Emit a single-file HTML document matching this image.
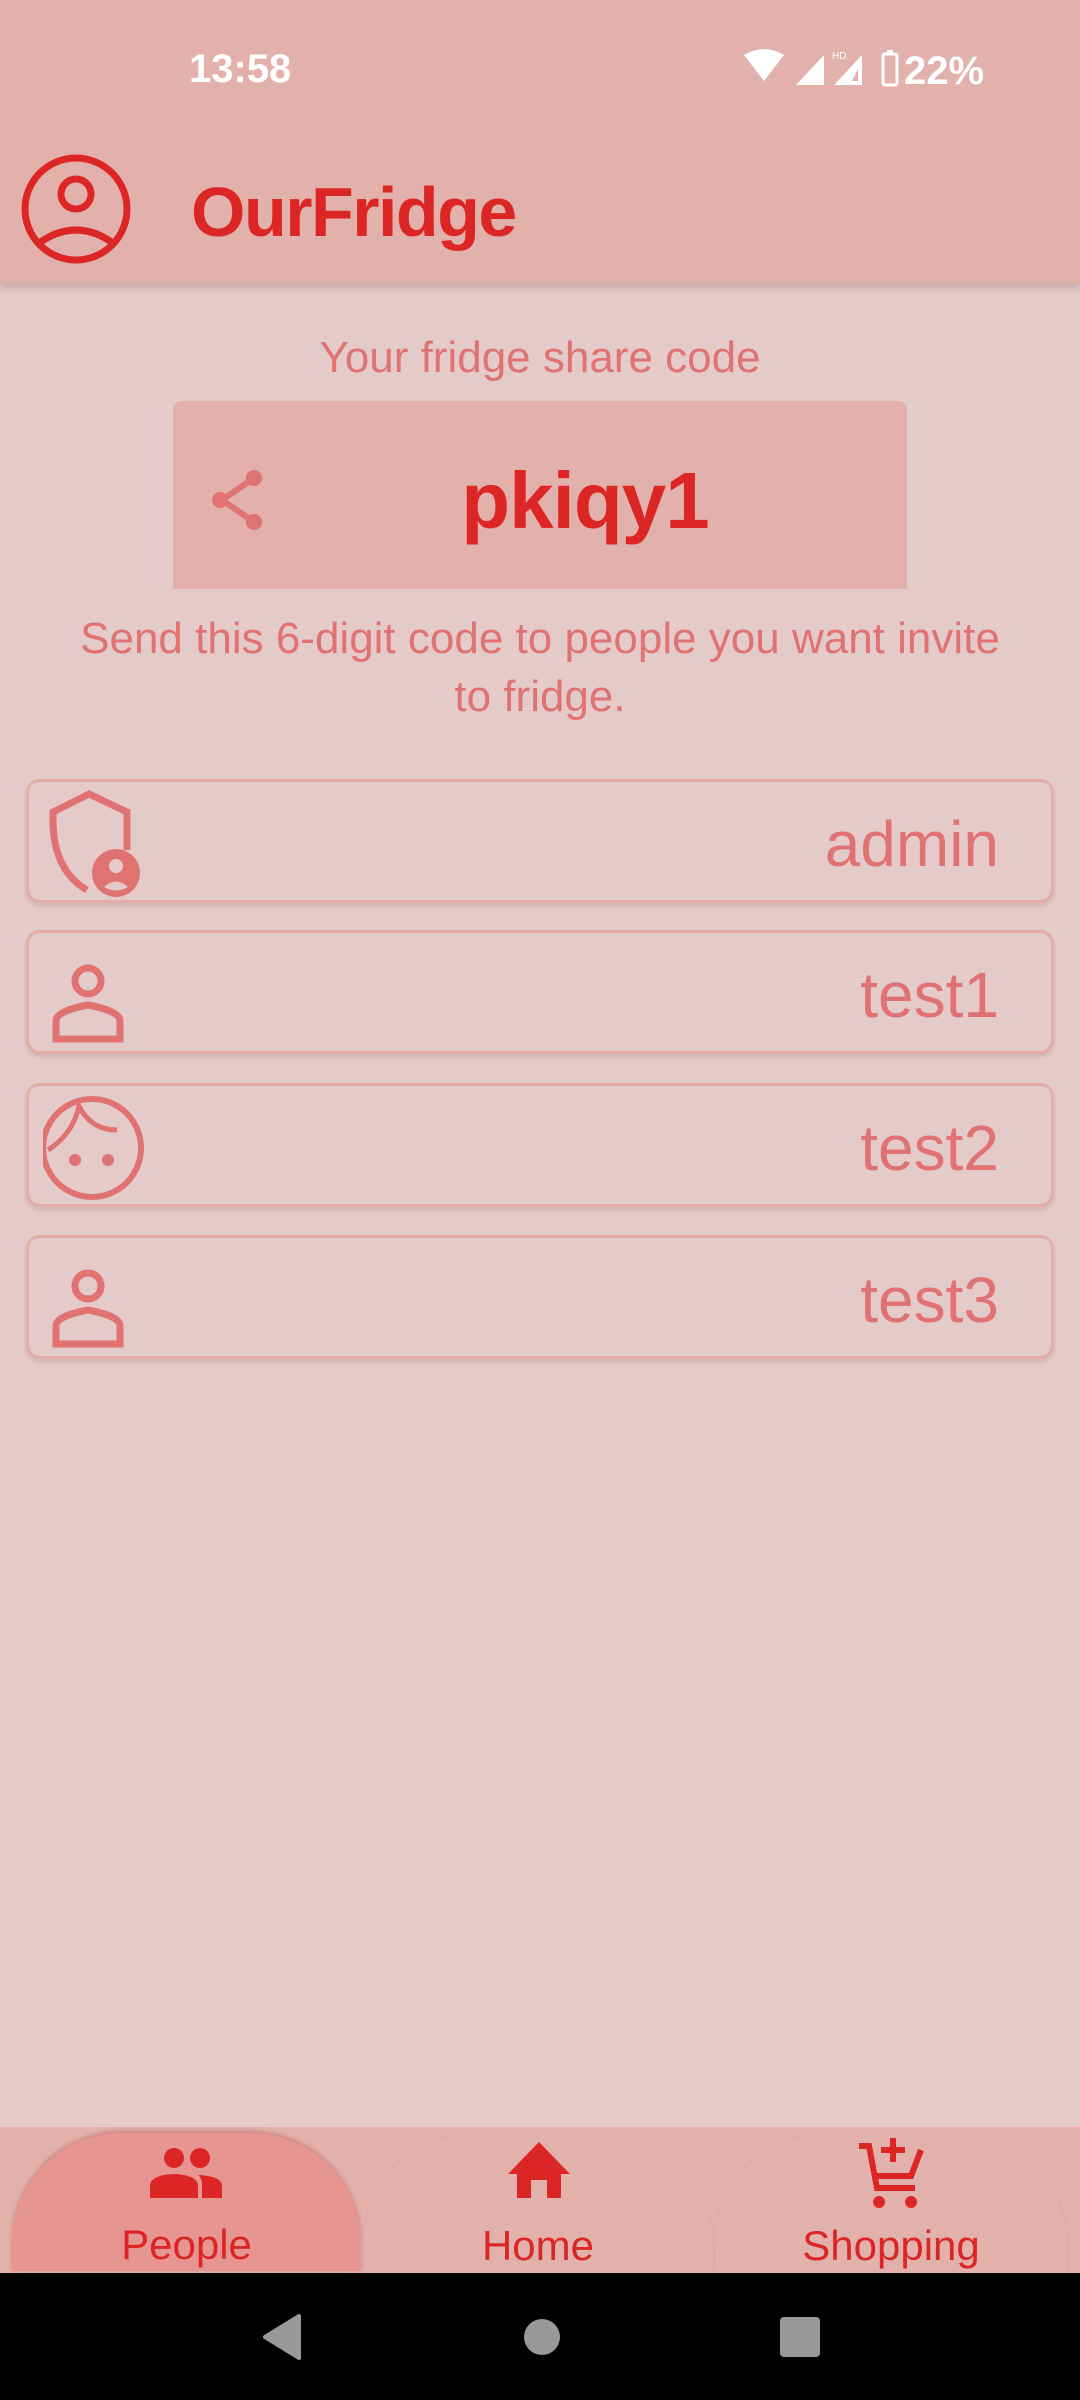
<!DOCTYPE html>
<html><head><meta charset="utf-8"><style>
*{margin:0;padding:0;box-sizing:border-box}
body{width:1080px;height:2400px;background:#e4cbca;font-family:"Liberation Sans",sans-serif;position:relative;overflow:hidden}
.abs{position:absolute}
.top{left:0;top:0;width:1080px;height:283px;background:#e3b1ab;box-shadow:0 4px 8px rgba(150,90,90,.35)}
.card{left:26px;width:1028px;height:124px;border:3px solid #e5aca7;border-radius:14px;box-shadow:0 3px 4px rgba(160,110,110,.25)}
.card .t{position:absolute;right:52px;top:26px;font-size:64px;color:#e07272;line-height:72px}
.card svg{position:absolute;left:14px;top:8px}
.nav{left:0;top:2127px;width:1080px;height:146px;background:#e3b1ab}
.tab{top:2133px;height:138px;border-radius:110px 110px 0 0;text-align:center}
.lbl{position:absolute;left:0;right:0;top:88px;font-size:42px;color:#dc2626}
</style></head><body>
<div class="abs top"></div>
<div class="abs" style="left:189px;top:47px;font-size:40px;color:#fff;font-weight:bold">13:58</div>
<svg class="abs" style="left:740px;top:47px" width="260" height="42" viewBox="0 0 260 42">
<path d="M4 8 Q24 -4 44 8 L24 34 Z" fill="#fff"/>
<path d="M56 38 L84 8 L84 38 Z" fill="#fff"/>
<text x="92" y="12" font-size="10" fill="#fff" font-family="Liberation Sans">HD</text>
<path d="M94 38 L122 8 L122 38 Z M112 34 L118 34 L118 22 Z" fill="#fff" fill-rule="evenodd"/>
<rect x="143" y="7" width="14" height="31" rx="2" fill="none" stroke="#fff" stroke-width="3"/>
<rect x="147" y="3" width="6" height="5" fill="#fff"/>
<text x="164" y="37" font-size="40" fill="#fff" font-weight="bold" font-family="Liberation Sans">22%</text>
</svg>
<svg class="abs" style="left:20px;top:153px" width="112" height="112" viewBox="0 0 112 112">
<circle cx="56" cy="56" r="51" fill="none" stroke="#dc2626" stroke-width="7"/>
<circle cx="56" cy="41" r="15" fill="none" stroke="#dc2626" stroke-width="7"/>
<path d="M19 90 Q56 64 93 90" fill="none" stroke="#dc2626" stroke-width="7"/>
</svg>
<div class="abs" style="left:191px;top:172px;font-size:70px;font-weight:bold;color:#dc2626;letter-spacing:-1.5px">OurFridge</div>
<div class="abs" style="left:0;width:1080px;top:333px;text-align:center;font-size:44px;color:#e07272">Your fridge share code</div>
<div class="abs" style="left:173px;top:401px;width:734px;height:188px;background:#e3b1ab;border-radius:8px 8px 0 0"></div>
<svg class="abs" style="left:208px;top:468px" width="56" height="64" viewBox="0 0 56 64">
<path d="M46 10 L14 32 L46 54" fill="none" stroke="#e07272" stroke-width="6"/>
<circle cx="46" cy="10" r="8" fill="#e07272"/><circle cx="12" cy="32" r="8" fill="#e07272"/><circle cx="46" cy="54" r="8" fill="#e07272"/>
</svg>
<div class="abs" style="left:330px;width:510px;top:455px;text-align:center;font-size:80px;font-weight:bold;color:#dc2626;letter-spacing:-1px">pkiqy1</div>
<div class="abs" style="left:60px;width:960px;top:610px;text-align:center;font-size:44px;line-height:58px;color:#e07272">Send this 6-digit code to people you want invite to fridge.</div>

<div class="abs card" style="top:779px"><svg width="110" height="110" viewBox="0 0 110 110"><path d="M44 100 Q10 80 10 30 L10 22 L46 4 L84 22 L84 60" fill="none" stroke="#e07272" stroke-width="7"/><circle cx="73" cy="83" r="24" fill="#e07272"/><circle cx="73" cy="76" r="7" fill="#e4cbca"/><path d="M61 97 Q73 86 85 97 Q73 104 61 97Z" fill="#e4cbca"/></svg><div class="t">admin</div></div>
<div class="abs card" style="top:930px"><svg width="110" height="110" viewBox="0 0 110 110"><circle cx="45" cy="40" r="13" fill="none" stroke="#e07272" stroke-width="7"/><path d="M13 98 L13 80 Q13 70 45 64 Q77 70 77 80 L77 98 Z" fill="none" stroke="#e07272" stroke-width="7"/></svg><div class="t">test1</div></div>
<div class="abs card" style="top:1083px"><svg width="110" height="110" viewBox="0 0 110 110"><circle cx="49" cy="54" r="49" fill="none" stroke="#e07272" stroke-width="6"/><path d="M5 56 Q30 40 36 12 Q48 36 74 36" fill="none" stroke="#e07272" stroke-width="5"/><circle cx="32" cy="66" r="6" fill="#e07272"/><circle cx="65" cy="66" r="6" fill="#e07272"/></svg><div class="t">test2</div></div>
<div class="abs card" style="top:1235px"><svg width="110" height="110" viewBox="0 0 110 110"><circle cx="45" cy="40" r="13" fill="none" stroke="#e07272" stroke-width="7"/><path d="M13 98 L13 80 Q13 70 45 64 Q77 70 77 80 L77 98 Z" fill="none" stroke="#e07272" stroke-width="7"/></svg><div class="t">test3</div></div>

<div class="abs nav"></div>
<div class="abs tab" style="left:12px;width:349px;background:#e79590;box-shadow:0 -2px 4px rgba(180,90,90,.5)">
<svg class="abs" style="left:138px;top:15px" width="74" height="50" viewBox="0 0 74 50"><circle cx="24" cy="10" r="10" fill="#dc2626"/><circle cx="50" cy="10" r="10" fill="#dc2626"/><path d="M0 50 L0 38 Q0 27 24 26 Q48 27 48 38 L48 50Z" fill="#dc2626"/><path d="M52 50 L52 36 Q52 30 48 27 Q72 28 72 38 L72 50Z" fill="#dc2626"/></svg>
<div class="lbl">People</div></div>
<div class="abs tab" style="left:362px;width:352px;border:1px solid #ddaaa5;border-bottom:none">
<svg class="abs" style="left:143px;top:-2px" width="66" height="66" viewBox="0 0 66 66"><path d="M33 10 L64 42 L55 42 L55 66 L41 66 L41 48 L25 48 L25 66 L11 66 L11 42 L2 42Z" fill="#dc2626"/></svg>
<div class="lbl">Home</div></div>
<div class="abs tab" style="left:714px;width:354px;border:1px solid #ddaaa5;border-bottom:none">
<svg class="abs" style="left:142px;top:2px" width="70" height="76" viewBox="0 0 70 76"><path d="M2 10 L12 10 L20 52 L58 52" fill="none" stroke="#dc2626" stroke-width="6"/><path d="M18 40 L54 40 L64 14" fill="none" stroke="#dc2626" stroke-width="6"/><path d="M36 2 V26 M24 14 H48" stroke="#dc2626" stroke-width="6"/><circle cx="22" cy="66" r="6" fill="#dc2626"/><circle cx="54" cy="66" r="6" fill="#dc2626"/></svg>
<div class="lbl">Shopping</div></div>
<div class="abs" style="left:0;top:2273px;width:1080px;height:127px;background:#000"></div>
<svg class="abs" style="left:260px;top:2310px" width="580" height="60" viewBox="0 0 580 60"><path d="M39 6 L39 48 L5 27Z" fill="#999" stroke="#999" stroke-width="4" stroke-linejoin="round"/><circle cx="282" cy="27" r="18" fill="#999"/><rect x="520" y="7" width="40" height="40" rx="4" fill="#999"/></svg>
</body></html>
